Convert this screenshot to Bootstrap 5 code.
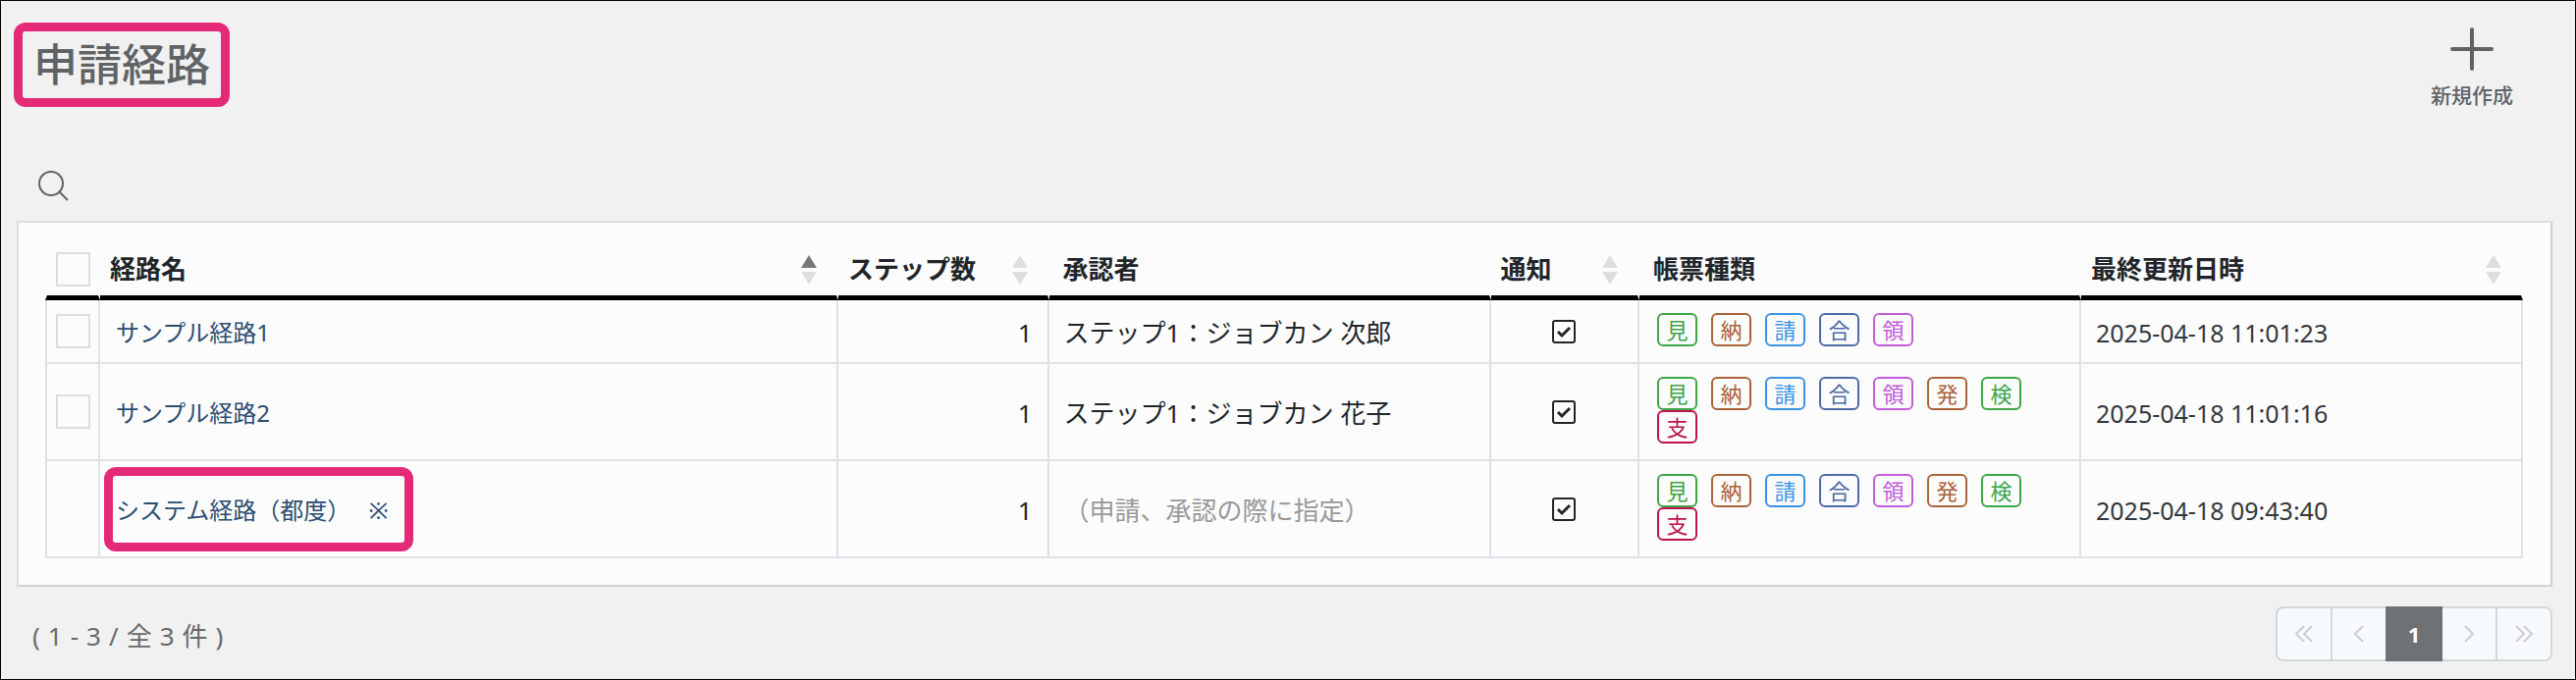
<!DOCTYPE html>
<html lang="ja">
<head>
<meta charset="utf-8">
<meta name="viewport" content="width=device-width, initial-scale=1">
<title>申請経路</title>
<link href="https://cdn.jsdelivr.net/npm/bootstrap@5.3.0/dist/css/bootstrap.min.css" rel="stylesheet">
<style>
  body { font-family: "Noto Sans", "Noto Sans CJK JP", sans-serif; font-size: 26px; line-height: 34px; background: #f1f1f1; color: #212529; }
  .page-frame { border: 1px solid #000; min-height: 100vh; padding: 22px 23px 0 16px; }
  .page-head { height: 126px; }
  .page-title { font-size: 45px; line-height: 68px; font-weight: 500; color: #5f6366; border: 9px solid #e42a76; border-radius: 12px; padding: 0 11px; margin: 0 0 0 -3px; }
  .create-btn { color: #5f6366; font-size: 21px; line-height: 28px; font-weight: 500; padding: 5px 0 0; margin-right: 40px; gap: 11px; border: 0; }
  .search-btn { color: #5f6366; padding: 0; margin: 24px 0 19px 21px; border: 0; line-height: 0; }
  .route-card { background: #fcfcfc; border: 2px solid #ddd; border-right-color: #d2d2d2; border-bottom-color: #d2d2d2; border-radius: 0; padding: 26px 28px 27px 27px; }
  .route-table { table-layout: fixed; width: 100%; border-collapse: separate; border-spacing: 0; margin: 0; }
  .route-table col.c-check { width: 56px; }
  .route-table col.c-step { width: 8.5%; }
  .route-table col.c-notice { width: 6%; }
  .route-table col.c-wide { width: 17.83%; }
  .route-table th { padding: 4px 13px 9px 14px; border: 0 solid #fcfcfc; border-right-width: 2px; border-bottom: 5px solid #000; font-weight: 700; vertical-align: middle; line-height: 35px; }
  .route-table th.sortable { padding-left: 10px; padding-right: 20px; }
  .route-table th:first-child { border-left-width: 2px; }
  .route-table td { padding: 13px 15px 16px; border: 0 solid #dee2e6; border-right-width: 2px; border-bottom-width: 2px; vertical-align: middle; }
  .route-table td:first-child { border-left-width: 2px; }
  .route-table .check-cell { padding-left: 0; padding-right: 0; text-align: center; line-height: 0; }
  .route-table td.check-cell, .route-table td.notice-cell { padding-top: 0; padding-bottom: 0; line-height: 0; text-align: center; }
  .route-table td.text-cell { padding-top: 2px; padding-bottom: 0; }
  .route-table td.name-cell { padding-left: 16px; }
  .form-check-input.row-check { width: 35px; height: 35px; margin: 0; border: 2px solid #ddd; border-radius: 0; background-color: #fcfcfc; }
  .sort-mark { fill: #dedede; flex: none; }
  .sort-mark .on { fill: #75797c; }
  .route-link { color: #2b4d71; font-size: 24px; text-decoration: none; }
  .route-link.marked { position: relative; }
  .route-link.marked::after { content: ""; position: absolute; inset: -27px -25px -26px -12px; border: 9px solid #e42a76; border-radius: 12px; }
  .route-link .note { margin-left: 12px; }
  .muted-text { color: #999; }
  .date-text { font-size: 25px; color: #33383c; }
  .doc-list { column-gap: 14px; padding-left: 3px; }
  .doc-tag { width: 41px; height: 34px; border: 2px solid; border-radius: 6px; font-size: 22px; line-height: 31px; text-align: center; }
  .doc-green { color: #3da648; }
  .doc-brown { color: #ab6239; }
  .doc-blue { color: #3b92e4; }
  .doc-navy { color: #4b6ba8; }
  .doc-purple { color: #c25bdc; }
  .doc-red { color: #be1350; }
  .list-foot { margin-top: 20px; color: #666a6d; }
  .count-text { padding: 4px 0 0 16px; column-gap: 8px; }
  .pagination { --bs-pagination-border-width: 2px; --bs-pagination-border-color: #d5d7d8; --bs-pagination-bg: #f7fafc; --bs-pagination-active-bg: #6e7275; --bs-pagination-active-border-color: #6e7275; --bs-pagination-border-radius: 8px; margin: 0; }
  .pagination .page-link { width: 58px; height: 56px; padding: 0; display: flex; align-items: center; justify-content: center; font-size: 22px; font-weight: 700; color: #cfcdd0; }
  .pagination .page-item:not(:first-child) .page-link { margin-left: -2px; }
  .pagination .page-link svg, .create-btn svg, .search-btn svg, .notice-cell svg { fill: none; stroke: currentColor; }
  .pagination .active .page-link { color: #fff; }
</style>
</head>
<body>
<main class="page-frame">
  <header class="page-head d-flex justify-content-between align-items-start">
    <h1 class="page-title">申請経路</h1>
    <button type="button" class="create-btn btn d-flex flex-column align-items-center">
      <svg width="44" height="44" viewBox="0 0 44 44" stroke-width="4" stroke-linecap="round" aria-hidden="true"><path d="M22 2v40M2 22h40"/></svg>
      新規作成
    </button>
  </header>
  <button type="button" class="search-btn btn d-block" aria-label="検索">
    <svg width="33" height="33" viewBox="0 0 33 33" stroke-width="2" aria-hidden="true"><circle cx="14" cy="14" r="12"/><path d="M22 22l9 9"/></svg>
  </button>

  <section class="route-card">
    <table class="route-table">
      <colgroup><col class="c-check"><col><col class="c-step"><col class="c-wide"><col class="c-notice"><col class="c-wide"><col class="c-wide"></colgroup>
      <thead>
        <tr>
          <th class="check-cell"><input class="form-check-input row-check" type="checkbox" aria-label="すべて選択"></th>
          <th class="sortable"><div class="d-flex justify-content-between align-items-center">経路名<svg class="sort-mark" width="16" height="30" viewBox="0 0 16 30"><path class="on" d="M8 0l8 13H0z"/><path d="M8 30l8-13H0z"/></svg></div></th>
          <th class="sortable"><div class="d-flex justify-content-between align-items-center">ステップ数<svg class="sort-mark" width="16" height="30" viewBox="0 0 16 30"><path d="M8 0l8 13H0zM8 30l8-13H0z"/></svg></div></th>
          <th>承認者</th>
          <th class="sortable"><div class="d-flex justify-content-between align-items-center">通知<svg class="sort-mark" width="16" height="30" viewBox="0 0 16 30"><path d="M8 0l8 13H0zM8 30l8-13H0z"/></svg></div></th>
          <th>帳票種類</th>
          <th class="sortable"><div class="d-flex justify-content-between align-items-center">最終更新日時<svg class="sort-mark" width="16" height="30" viewBox="0 0 16 30"><path d="M8 0l8 13H0zM8 30l8-13H0z"/></svg></div></th>
        </tr>
      </thead>
      <tbody>
        <tr>
          <td class="check-cell"><input class="form-check-input row-check" type="checkbox" aria-label="サンプル経路1を選択"></td>
          <td class="text-cell name-cell"><a class="route-link" href="#">サンプル経路1</a></td>
          <td class="text-cell text-end">1</td>
          <td class="text-cell">ステップ1：ジョブカン 次郎</td>
          <td class="notice-cell"><svg width="24" height="24" viewBox="0 0 24 24" stroke-width="2" role="img" aria-label="通知あり"><rect x="1" y="1" width="22" height="22" rx="2"/><path stroke-width="3" d="M6 12l4 4 8-8"/></svg></td>
          <td><div class="doc-list d-flex flex-wrap"><span class="doc-tag doc-green">見</span><span class="doc-tag doc-brown">納</span><span class="doc-tag doc-blue">請</span><span class="doc-tag doc-navy">合</span><span class="doc-tag doc-purple">領</span></div></td>
          <td class="text-cell date-text">2025-04-18 11:01:23</td>
        </tr>
        <tr>
          <td class="check-cell"><input class="form-check-input row-check" type="checkbox" aria-label="サンプル経路2を選択"></td>
          <td class="text-cell name-cell"><a class="route-link" href="#">サンプル経路2</a></td>
          <td class="text-cell text-end">1</td>
          <td class="text-cell">ステップ1：ジョブカン 花子</td>
          <td class="notice-cell"><svg width="24" height="24" viewBox="0 0 24 24" stroke-width="2" role="img" aria-label="通知あり"><rect x="1" y="1" width="22" height="22" rx="2"/><path stroke-width="3" d="M6 12l4 4 8-8"/></svg></td>
          <td><div class="doc-list d-flex flex-wrap"><span class="doc-tag doc-green">見</span><span class="doc-tag doc-brown">納</span><span class="doc-tag doc-blue">請</span><span class="doc-tag doc-navy">合</span><span class="doc-tag doc-purple">領</span><span class="doc-tag doc-brown">発</span><span class="doc-tag doc-green">検</span><span class="doc-tag doc-red">支</span></div></td>
          <td class="text-cell date-text">2025-04-18 11:01:16</td>
        </tr>
        <tr>
          <td class="check-cell"></td>
          <td class="text-cell name-cell"><a class="route-link marked" href="#">システム経路（都度） <span class="note">※</span></a></td>
          <td class="text-cell text-end">1</td>
          <td class="text-cell muted-text">（申請、承認の際に指定）</td>
          <td class="notice-cell"><svg width="24" height="24" viewBox="0 0 24 24" stroke-width="2" role="img" aria-label="通知あり"><rect x="1" y="1" width="22" height="22" rx="2"/><path stroke-width="3" d="M6 12l4 4 8-8"/></svg></td>
          <td><div class="doc-list d-flex flex-wrap"><span class="doc-tag doc-green">見</span><span class="doc-tag doc-brown">納</span><span class="doc-tag doc-blue">請</span><span class="doc-tag doc-navy">合</span><span class="doc-tag doc-purple">領</span><span class="doc-tag doc-brown">発</span><span class="doc-tag doc-green">検</span><span class="doc-tag doc-red">支</span></div></td>
          <td class="text-cell date-text">2025-04-18 09:43:40</td>
        </tr>
      </tbody>
    </table>
  </section>

  <footer class="list-foot d-flex justify-content-between align-items-center">
    <div class="count-text d-flex"><span>(</span> <span>1</span> <span>-</span> <span>3</span> <span>/</span> <span>全</span> <span>3</span> <span>件</span> <span>)</span></div>
    <nav aria-label="ページ送り">
      <ul class="pagination">
        <li class="page-item"><a class="page-link" href="#" aria-label="最初"><svg width="20" height="18" viewBox="0 0 20 18" stroke-width="2"><path d="M10 1L2 9l8 8M18 1l-8 8 8 8"/></svg></a></li>
        <li class="page-item"><a class="page-link" href="#" aria-label="前"><svg width="12" height="18" viewBox="0 0 12 18" stroke-width="2"><path d="M10 1L2 9l8 8"/></svg></a></li>
        <li class="page-item active" aria-current="page"><a class="page-link" href="#">1</a></li>
        <li class="page-item"><a class="page-link" href="#" aria-label="次"><svg width="12" height="18" viewBox="0 0 12 18" stroke-width="2"><path d="M2 1l8 8-8 8"/></svg></a></li>
        <li class="page-item"><a class="page-link" href="#" aria-label="最後"><svg width="20" height="18" viewBox="0 0 20 18" stroke-width="2"><path d="M2 1l8 8-8 8M10 1l8 8-8 8"/></svg></a></li>
      </ul>
    </nav>
  </footer>
</main>
<script src="https://cdn.jsdelivr.net/npm/bootstrap@5.3.0/dist/js/bootstrap.bundle.min.js"></script>
</body>
</html>
